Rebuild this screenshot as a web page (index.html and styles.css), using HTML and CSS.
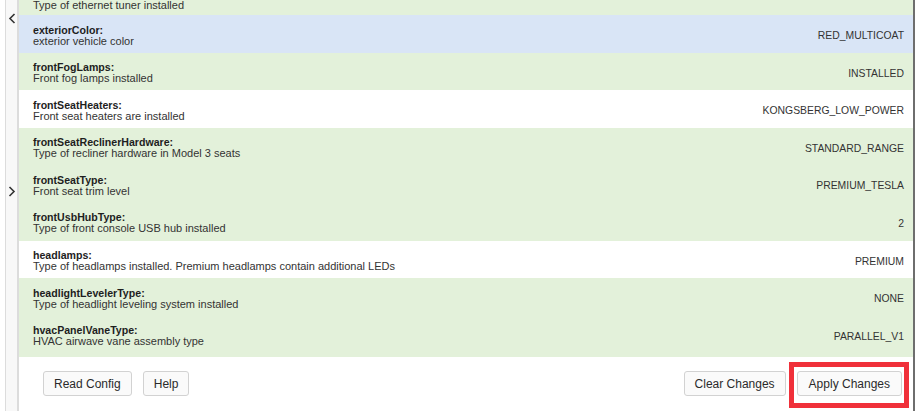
FILE: index.html
```html
<!DOCTYPE html>
<html lang="en">
<head>
    <meta charset="UTF-8">
    <title>Vehicle Config</title>
    <link rel="stylesheet" href="styles.css">
</head>
<body>
    <div class="page">
        <aside class="side-strip">
            <span class="chevron chevron-top">
                <svg width="8" height="11" viewBox="0 0 8 11"><path d="M6.5 1 L2 5.5 L6.5 10" fill="none" stroke="#333" stroke-width="1.6"/></svg>
            </span>
            <span class="chevron chevron-mid">
                <svg width="8" height="11" viewBox="0 0 8 11"><path d="M1.5 1 L6 5.5 L1.5 10" fill="none" stroke="#333" stroke-width="1.6"/></svg>
            </span>
        </aside>
        <main class="panel">
            <div class="config-list">
                <div class="row changed first">
                    <div class="info">
                        <p class="desc">Type of ethernet tuner installed</p>
                    </div>
                </div>
                <div class="row hover">
                    <div class="info">
                        <p class="name">exteriorColor:</p>
                        <p class="desc">exterior vehicle color</p>
                    </div>
                    <span class="value">RED_MULTICOAT</span>
                </div>
                <div class="row changed">
                    <div class="info">
                        <p class="name">frontFogLamps:</p>
                        <p class="desc">Front fog lamps installed</p>
                    </div>
                    <span class="value">INSTALLED</span>
                </div>
                <div class="row">
                    <div class="info">
                        <p class="name">frontSeatHeaters:</p>
                        <p class="desc">Front seat heaters are installed</p>
                    </div>
                    <span class="value">KONGSBERG_LOW_POWER</span>
                </div>
                <div class="row changed">
                    <div class="info">
                        <p class="name">frontSeatReclinerHardware:</p>
                        <p class="desc">Type of recliner hardware in Model 3 seats</p>
                    </div>
                    <span class="value">STANDARD_RANGE</span>
                </div>
                <div class="row changed">
                    <div class="info">
                        <p class="name">frontSeatType:</p>
                        <p class="desc">Front seat trim level</p>
                    </div>
                    <span class="value">PREMIUM_TESLA</span>
                </div>
                <div class="row changed">
                    <div class="info">
                        <p class="name">frontUsbHubType:</p>
                        <p class="desc">Type of front console USB hub installed</p>
                    </div>
                    <span class="value">2</span>
                </div>
                <div class="row">
                    <div class="info">
                        <p class="name">headlamps:</p>
                        <p class="desc">Type of headlamps installed. Premium headlamps contain additional LEDs</p>
                    </div>
                    <span class="value">PREMIUM</span>
                </div>
                <div class="row changed">
                    <div class="info">
                        <p class="name">headlightLevelerType:</p>
                        <p class="desc">Type of headlight leveling system installed</p>
                    </div>
                    <span class="value">NONE</span>
                </div>
                <div class="row changed last">
                    <div class="info">
                        <p class="name">hvacPanelVaneType:</p>
                        <p class="desc">HVAC airwave vane assembly type</p>
                    </div>
                    <span class="value">PARALLEL_V1</span>
                </div>
            </div>
            <footer class="actions">
                <div class="actions-left">
                    <button class="btn">Read Config</button>
                    <button class="btn">Help</button>
                </div>
                <div class="actions-right">
                    <button class="btn">Clear Changes</button>
                    <span class="highlight">
                        <button class="btn btn-wide">Apply Changes</button>
                    </span>
                </div>
            </footer>
        </main>
        <div class="edge"></div>
    </div>
</body>
</html>
```

FILE: styles.css
```css
body {
    margin: 0;
    padding: 0;
    font-family: 'Liberation Sans', Arial, sans-serif;
    color: #2a2a2a;
    background-color: #fff;
}

.page {
    display: flex;
    height: 411px;
    overflow: hidden;
}

.side-strip {
    width: 11px;
    margin-left: 5px;
    border-left: 1px solid #dcdcdc;
    border-right: 2px solid #dcdcdc;
    background-color: #f8f8f8;
    display: flex;
    flex-direction: column;
    align-items: center;
    padding-top: 10px;
    box-sizing: content-box;
}

.chevron {
    display: block;
    height: 11px;
}

.chevron-mid {
    margin-top: 162px;
}

.panel {
    flex: 1;
    display: flex;
    flex-direction: column;
    min-width: 0;
}

.edge {
    width: 2px;
    margin-right: 2px;
    background-color: #6e6e6e;
}

.config-list {
    flex: 1;
    overflow: hidden;
}

.row {
    display: flex;
    align-items: center;
    justify-content: space-between;
    padding: 9.5px 9px 6.1px 14px;
    background-color: #fff;
}

.row.first {
    padding-top: 0;
    padding-bottom: 4px;
}

.row.last {
    padding-bottom: 10px;
}

.row.changed {
    background-color: #e3f1da;
}

.row.hover {
    background-color: #d9e5f6;
}

.name,
.desc {
    margin: 0;
    font-size: 11px;
    line-height: 11px;
}

.name {
    font-weight: bold;
    font-size: 10.6px;
    color: #1e1e1e;
}

.desc {
    color: #333;
}

.value {
    font-size: 10.4px;
    color: #333;
}

.actions {
    display: flex;
    justify-content: space-between;
    align-items: flex-start;
    padding: 14px 4px 0 24px;
    height: 40px;
}

.actions-left,
.actions-right {
    display: flex;
    align-items: flex-start;
    gap: 11px;
}

.actions-right {
    gap: 3px;
}

.btn {
    font-family: 'Liberation Sans', Arial, sans-serif;
    font-size: 12px;
    color: #2a2a2a;
    background-color: #fafafa;
    border: 1px solid #d2d2d2;
    border-radius: 3px;
    height: 25px;
    padding: 0 10px;
    cursor: pointer;
}

.btn-wide {
    padding: 0 11px;
}

.highlight {
    display: block;
    margin-top: -9px;
    border: 5px solid #f0303a;
    padding: 4px 2px 7px 3px;
}
```
